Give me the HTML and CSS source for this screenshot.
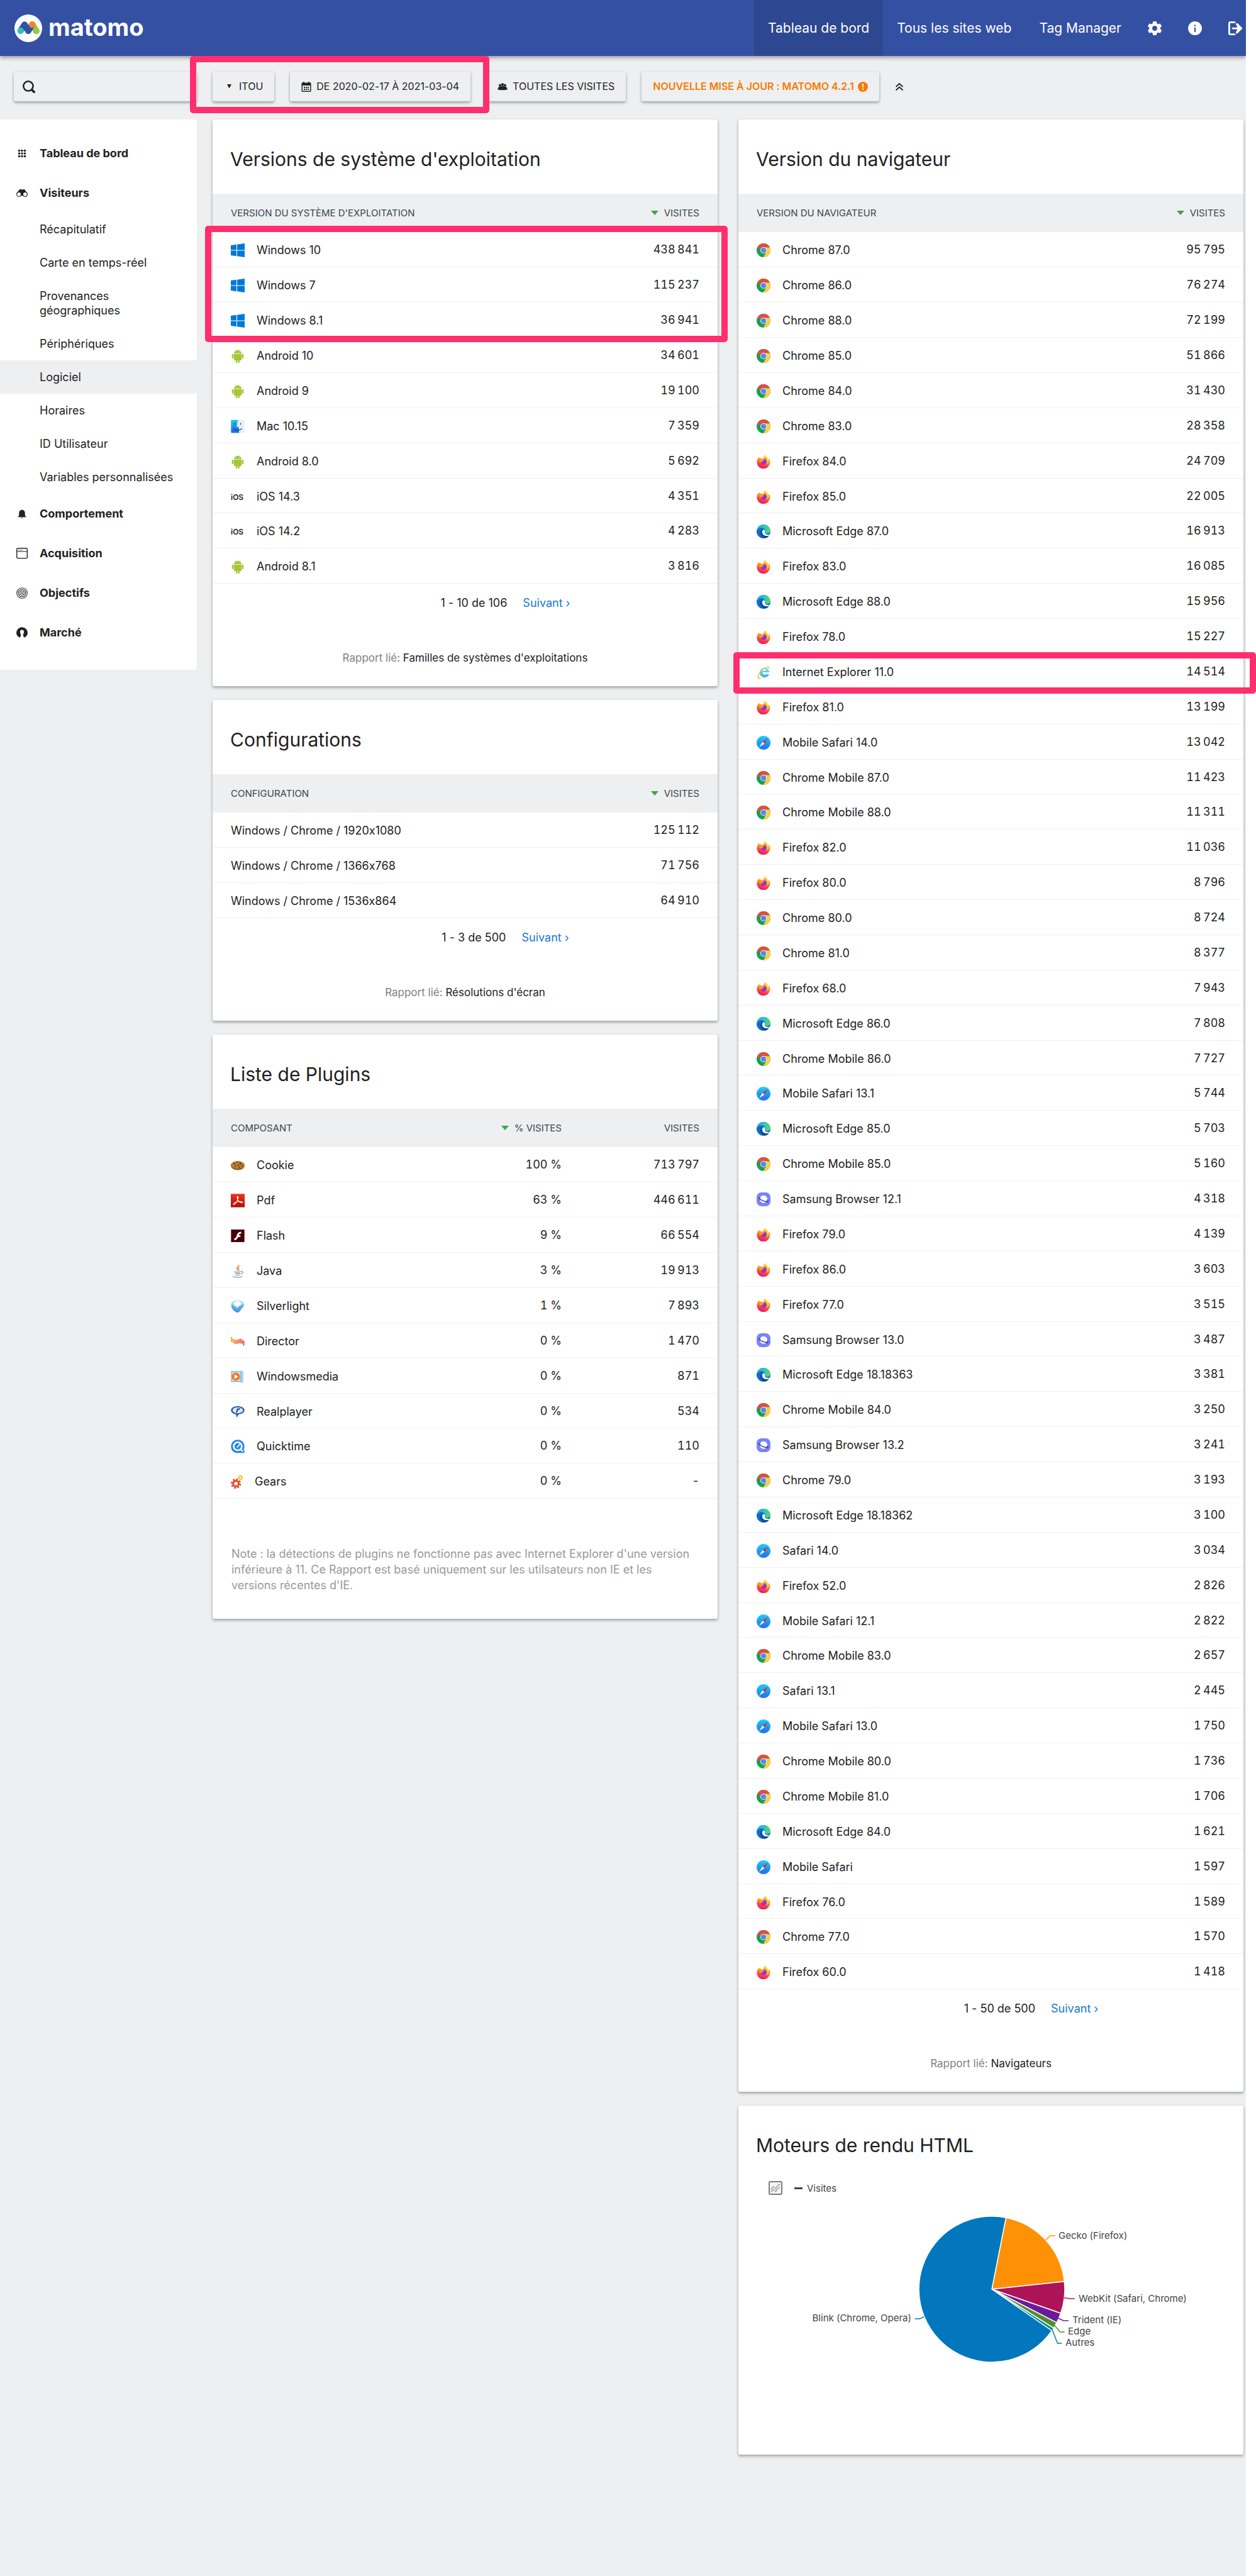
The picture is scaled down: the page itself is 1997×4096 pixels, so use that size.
FILE: index.html
```html
<!DOCTYPE html>
<html lang="fr">
<head>
<meta charset="utf-8">
<meta name="viewport" content="width=device-width, initial-scale=1">
<title>Matomo - Logiciel</title>
<link rel="stylesheet" href="styles.css">
</head>
<body>
<svg class="sprite" aria-hidden="true">
  <defs>
    <linearGradient id="g-ff" x1="0.7" y1="0" x2="0.4" y2="1"><stop offset="0" stop-color="#ffe14a"/><stop offset=".4" stop-color="#ff9a1f"/><stop offset=".75" stop-color="#ff3b47"/><stop offset="1" stop-color="#e5156f"/></linearGradient>
    <linearGradient id="g-saf" x1="0" y1="0" x2="0" y2="1"><stop offset="0" stop-color="#19d0fb"/><stop offset="1" stop-color="#2268ee"/></linearGradient>
    <linearGradient id="g-edge" x1="0" y1="0" x2="1" y2="0"><stop offset="0" stop-color="#1fa8e0"/><stop offset=".5" stop-color="#2fbfd0"/><stop offset="1" stop-color="#62dd4e"/></linearGradient>
    <linearGradient id="g-mac" x1="0" y1="0" x2="0" y2="1"><stop offset="0" stop-color="#1fc6fa"/><stop offset="1" stop-color="#1b62ee"/></linearGradient>
    <linearGradient id="g-pdf" x1="0" y1="0" x2="0" y2="1"><stop offset="0" stop-color="#f0341c"/><stop offset="1" stop-color="#ab1006"/></linearGradient>
    <linearGradient id="g-ie" x1="0" y1="0" x2="0" y2="1"><stop offset="0" stop-color="#7fdcf6"/><stop offset="1" stop-color="#35b3ea"/></linearGradient>
    <linearGradient id="g-dir" gradientUnits="userSpaceOnUse" x1="0" y1="0" x2="32" y2="0"><stop offset="0" stop-color="#f5a01e"/><stop offset="1" stop-color="#dc2326"/></linearGradient>
    <radialGradient id="g-sl" cx=".5" cy=".2" r=".8"><stop offset="0" stop-color="#ffffff"/><stop offset=".5" stop-color="#a8d8f5"/><stop offset="1" stop-color="#2b7fd0"/></radialGradient>
  </defs>
  <symbol id="chrome" viewBox="0 0 32 32"><circle cx="16" cy="16" r="16" fill="#15a05a"/><path d="M30.4 9A16 16 0 0 1 15.5 32L22.5 19.7 16 9Z" fill="#ffce44"/><path d="M2.5 7.5A16 16 0 0 1 30.4 9H16L9.5 19.7Z" fill="#dc4f41"/><circle cx="16" cy="16" r="7.4" fill="#f1f1f1"/><circle cx="16" cy="16" r="5.9" fill="#4a8af4"/></symbol>
  <symbol id="firefox" viewBox="0 0 32 32"><path d="M6 5c.2 1.8.7 2.800 1.800 3.400L10 7l-.1 2.600C12 8.500 14 8.500 15.500 8.700 16 5.500 18 2 20.500 0c.6 3 2.300 4.800 4.300 6.800C26.500 8.500 27 10 27.300 12c1-.8 1.600-1.800 1.800-3C31 12 31.600 15 31 18.500A15.300 15.300 0 0 1 .6 19C.2 13.500 2 8.500 6 5Z" fill="url(#g-ff)"/><path d="M9.500 17a6.700 6.700 0 1 0 12.800-3.500C21.500 11 19.500 8.800 16.500 8.900c1.500 1 2 2 1.900 2.900-3 .5-3.500 2.200-4.900 2.900-1.500.6-3 .7-4 2.300Z" fill="#8b35e0"/><path d="M4.500 13.500c2-1.500 4.500-2 6.500-.6l4.600.7c-1 2.600-3.500 2.300-4.600 4.300" fill="#ffa018"/><path d="M20.500 2c-2 4 3 6.500 4.300 11.500.8 4-.6 7-2.800 8.500 6-1.500 7-7 5-11.500C25.500 7.500 22 6 20.500 2Z" fill="#ffd83f"/></symbol>
  <symbol id="edge" viewBox="0 0 32 32"><circle cx="16" cy="16" r="16" fill="#0e6ccb"/><path d="M1 14C5 7 15 5 19 12c1.500 3 .2 5-.2 6.300 1.200 3.500 8 4 11.200.2A12 12 0 0 0 32 15C31.500 6 24.500 0 16 0 8 0 1.500 6 1 14Z" fill="url(#g-edge)"/><path d="M16.500 12C10 11 7 18 9.500 24c2 4.500 7 7.500 11 7.300A16 16 0 0 0 30 24c-4 2-12 2-14-4.500-.6-2.500-.5-5 .5-7.500Z" fill="#114a94"/><path d="M16.500 12c-3 .8-4.500 4-3.500 7.500 1.700 6 10 8.500 16.800 5.500.7-.8 1-1.700.3-1.800-5 1.300-10.500-.7-11.500-4.200 1.500-2 1-6-2.100-7Z" fill="#fff"/></symbol>
  <symbol id="safari" viewBox="0 0 32 32"><circle cx="16" cy="16" r="16" fill="url(#g-saf)"/><circle cx="16" cy="16" r="13.600" fill="none" stroke="#8fd3ff" stroke-width="1" stroke-opacity=".5" stroke-dasharray="1 1.400"/><path d="M26.500 5.500 18 18l-4-4Z" fill="#f2231f"/><path d="M5.500 26.500 14 14l4 4Z" fill="#fff"/></symbol>
  <symbol id="samsung" viewBox="0 0 32 32"><rect width="32" height="32" rx="11" fill="#7a83fb"/><ellipse cx="16" cy="16.500" rx="11" ry="4" transform="rotate(22 16 16.500)" fill="none" stroke="#4448b5" stroke-width="2"/><circle cx="16" cy="15.600" r="8.800" fill="#fff"/><path d="M6.300 12.800C9 18 19 22.500 26.500 20" fill="none" stroke="#4448b5" stroke-width="2.200"/></symbol>
  <symbol id="ie" viewBox="0 0 32 32"><path d="M29 20.500A11.300 11.300 0 1 1 29.600 16H13.500c.3 5.500 6.500 6 8 4.500Z M13.600 12.500h8.900c-.5-5-8.200-5-8.900 0Z" fill="url(#g-ie)" fill-rule="evenodd"/><path d="M4 31C-2 26 9 8 22 3.500c6-2.300 9.500 0 7.500 5.500C29 4 24 4.500 19.500 7 9 13 2 25 6.500 28.500c1.500 1 4 .5 6-.8C9 31 6 32.300 4 31Z" fill="#f6c330"/></symbol>
  <symbol id="windows" viewBox="0 0 32 32"><path d="M0 4.500 13 2.700V15.300H0ZM14.600 2.500 32 0V15.300H14.600ZM0 16.700H13V29.300L0 27.500ZM14.600 16.700H32V32L14.600 29.500Z" fill="#0078d7"/></symbol>
  <symbol id="android" viewBox="0 0 32 32"><path d="M7 11.500h18V24a2 2 0 0 1-2 2h-2.500v4.300a1.900 1.900 0 0 1-3.800 0V26h-1.400v4.300a1.900 1.900 0 0 1-3.800 0V26H9a2 2 0 0 1-2-2ZM2.500 12.800a1.900 1.900 0 0 1 3.700 0v7.500a1.900 1.900 0 0 1-3.700 0ZM25.800 12.800a1.900 1.900 0 0 1 3.700 0v7.500a1.900 1.900 0 0 1-3.700 0ZM7 10.500C7.200 7 9.500 4.500 12 3.500L10.500 1 11 .7l1.600 2.500a10 10 0 0 1 6.800 0L21 .7l.5.3L20 3.500c2.500 1 4.800 3.500 5 7Z" fill="#a4c639"/><circle cx="12" cy="7" r=".9" fill="#fff"/><circle cx="20" cy="7" r=".9" fill="#fff"/></symbol>
  <symbol id="mac" viewBox="0 0 32 32"><rect x=".5" y="1" width="31" height="30" rx="2" fill="#e6edf5"/><path d="M2.500 1H17c-2 5-3 10-3 16h4.500c0 5 .3 9 1 14H2.500a2 2 0 0 1-2-2V3a2 2 0 0 1 2-2Z" fill="url(#g-mac)"/><path d="M9.500 8.500v3M22.500 8.500v3M6.500 21c5 5 14 5 19 0" fill="none" stroke="#15375f" stroke-width="1.500" stroke-linecap="round"/></symbol>
  <symbol id="cookie" viewBox="0 0 32 32"><ellipse cx="16" cy="16.500" rx="16" ry="10.500" fill="#8a521d"/><ellipse cx="16" cy="15" rx="15.500" ry="9" fill="#bf7f38"/><g fill="#57300f"><circle cx="8" cy="12" r="1.700"/><circle cx="15" cy="9.500" r="1.500"/><circle cx="22" cy="12" r="2"/><circle cx="17" cy="16" r="1.800"/><circle cx="10" cy="18.500" r="1.600"/><circle cx="26" cy="17" r="1.700"/><circle cx="20" cy="21" r="1.600"/></g></symbol>
  <symbol id="pdf" viewBox="0 0 32 32"><rect width="32" height="31" y=".5" fill="url(#g-pdf)"/><path d="M6 25c-1-3 8-8 19-6.500 3 .5 3 3.200 0 2.700-5-1-10-6.500-10.500-12.200-.1-3.500 2.600-3.500 2.500 0C17 15 9 27 6 25Z" fill="none" stroke="#fff" stroke-width="1.500"/></symbol>
  <symbol id="flash" viewBox="0 0 32 32"><rect x=".5" y="1.500" width="31" height="29" fill="#450005"/><path d="M24 6.500v4.300c-3.500 0-4.500 1.500-5.500 4H22v4h-5c-2 4.500-4.500 7.500-9 7.500v-4.300c5-.5 4.800-6.500 7.500-11C17.500 8 20 6.500 24 6.500Z" fill="#fff"/></symbol>
  <symbol id="java" viewBox="0 0 32 32"><path d="M18 1c2 4-6 6-4 10 .6 1.500 2 2.500 2.200 4.500M20.500 6.500c-4 2-4.500 4-2.500 6 1 1.200.6 2.200-.5 3" fill="none" stroke="#ec7a35" stroke-width="2"/><path d="M8 17c-1 2 15 2 15 .2M9.500 21c1 1.600 11 1.600 12.500 0M11 24.800c2 1.300 8 1.300 10 0M5.500 27.500c-3 3.500 21 4 21 .5M23.500 17c6-1.500 5 4.500-.5 6" fill="none" stroke="#7f9fbd" stroke-width="1.900"/></symbol>
  <symbol id="silverlight" viewBox="0 0 32 32"><path d="M1 12C2 5 8 1 16 1c9 0 15 6 14.500 12-.6 5-5 8-8 12-2 3.500-4 5.500-7.500 5.500C9 29 1 23 1 12Z" fill="url(#g-sl)"/><path d="M1 13c6 0 10 6 14 8 4-5 8-7 15-9-1 6-6 8-8.500 13-2 4-5 5.500-8 4.500C6 27 1 20 1 13Z" fill="#4b9fe0" opacity=".75"/><path d="M5 9c6-1 15-1 21 1-4 1-8 4-11 8C12 14 8 11 5 9Z" fill="#fff"/></symbol>
  <symbol id="director" viewBox="0 0 32 32"><path d="M1.500 5.500v12M5 9v10M8.500 11.500v10M12 12v10M15.500 11.500v10M19 10.500v10M22.500 9.500v11M26 11.500v10M29.800 14v11.500" stroke="url(#g-dir)" stroke-width="2.400" fill="none"/></symbol>
  <symbol id="wmedia" viewBox="0 0 32 32"><path d="M21 2.500h8v27h-8Z" fill="#a9d2ee"/><rect x=".5" y="3" width="23" height="25.500" rx="1.500" fill="#7fb9e2"/><rect x="2.500" y="5" width="19" height="21" fill="#cfe6f6"/><circle cx="11.500" cy="16" r="9.500" fill="#f07a1c"/><path d="m8.500 10.500 8.500 5.500-8.500 5.500Z" fill="#fff"/></symbol>
  <symbol id="real" viewBox="0 0 32 32"><path d="M16 3C7 3 .5 6.500.5 12.500c0 5 5.500 8.500 11.500 9.200L13.500 29l5-7.600c7.500-.5 13-3.900 13-8.900C31.500 6.500 25 3 16 3Z" fill="#1f5ca8"/><ellipse cx="16" cy="12.300" rx="12" ry="6.900" fill="#dbe8f6"/><path d="M12 17.500 14.500 8h3l-.5 1.800c1.500-2 3-2.400 5-2l-.9 3c-3-.7-4.600.2-5.300 2.700l-1 4Z" fill="#123f80"/></symbol>
  <symbol id="quicktime" viewBox="0 0 32 32"><path d="M16 .5C25 .5 31.500 7 31.500 16c0 3-.7 5.300-1.800 7.500l1.800 3v4.500H16C7 31.500.5 25 .5 16S7 .5 16 .5Z" fill="#2389ea"/><circle cx="16" cy="15.500" r="9.300" fill="none" stroke="#fff" stroke-width="3.600"/><path d="m22 21.500 5.500 6" stroke="#fff" stroke-width="3.400"/><path d="m15 17.500 6-7" stroke="#fff" stroke-width="2.600" stroke-linecap="round"/></symbol>
  <symbol id="gears" viewBox="0 0 28 32"><circle cx="12" cy="20.500" r="6.500" fill="none" stroke="#e2492f" stroke-width="4.600"/><circle cx="12" cy="20.500" r="10.300" fill="none" stroke="#e2492f" stroke-width="3.400" stroke-dasharray="4.500 3.590"/><circle cx="22.500" cy="6.500" r="3.500" fill="none" stroke="#f3c428" stroke-width="2.600"/><circle cx="22.500" cy="6.500" r="5.300" fill="none" stroke="#f3c428" stroke-width="1.800" stroke-dasharray="2.300 1.860"/></symbol>
</svg>

<div class="shell">
  <header class="topbar">
    <a class="logo" href="#" aria-label="matomo">
      <svg viewBox="0 0 63 63"><circle cx="31.500" cy="31.500" r="31.500" fill="#fff"/><path d="M41 23 50 38" stroke="#95c748" stroke-width="14" stroke-linecap="round"/><circle cx="49.500" cy="37" r="7.500" fill="#95c748"/><path d="M14 37 23 23 31.500 37.500 40 24" stroke="#3152a0" stroke-width="14" stroke-linecap="round" stroke-linejoin="round" fill="none"/><circle cx="40.500" cy="23" r="7.600" fill="#f38334"/><circle cx="14" cy="37" r="7.400" fill="#35bfc0"/></svg>
      <span>matomo</span>
    </a>
    <nav class="topnav" aria-label="Menu principal">
      <a class="active" href="#">Tableau de bord</a>
      <a href="#">Tous les sites web</a>
      <a href="#">Tag Manager</a>
      <div class="topicons">
        <a href="#" aria-label="Administration"><svg viewBox="0 0 32 32"><path fill="#fff" fill-rule="evenodd" d="M12 0h8l.9 4.800 3 1.700 4.500-1.700 3.800 6.700-3.600 3v3l3.600 3-3.800 6.700-4.500-1.700-3 1.700L20 32h-8l-.9-4.800-3-1.700-4.500 1.700L-.2 20.500l3.600-3v-3l-3.600-3 3.800-6.700 4.500 1.700 3-1.700ZM16 10.300a5.700 5.700 0 1 0 0 11.400 5.700 5.700 0 0 0 0-11.400Z"/></svg></a>
        <a href="#" aria-label="Aide"><svg viewBox="0 0 32 32"><circle cx="16" cy="16" r="16" fill="#fff"/><path d="M14.300 8h3.400v3.200h-3.400ZM14.300 14.300h3.400v10.200h-3.400Z" fill="#3450a3"/></svg></a>
        <a href="#" aria-label="Déconnexion"><svg viewBox="0 0 32 32"><path d="M14.500 2H5a3 3 0 0 0-3 3v22a3 3 0 0 0 3 3h9.500M10 16h16" fill="none" stroke="#fff" stroke-width="4" stroke-linecap="round"/><path d="m20 6.500 9.500 9.500-9.500 9.500" fill="none" stroke="#fff" stroke-width="5" stroke-linecap="round" stroke-linejoin="round"/><path d="M20 6.500 29.500 16 20 25.500Z" fill="#fff"/></svg></a>
      </div>
    </nav>
  </header>

  <div class="layout">
    <aside class="side">
      <form class="search" role="search">
        <label for="q"><svg viewBox="0 0 28 28"><circle cx="12.500" cy="12.500" r="10.700" fill="none" stroke="#212121" stroke-width="3.500"/><path d="m20.500 20.500 5 5" stroke="#212121" stroke-width="5" stroke-linecap="round"/></svg></label>
        <input id="q" type="text" aria-label="Recherche">
      </form>
      <nav class="menu" aria-label="Rapports">
        <a class="cat" href="#"><svg viewBox="0 0 26 26"><g fill="#212121"><circle cx="6.500" cy="6.500" r="2.600"/><circle cx="13" cy="6.500" r="2.600"/><circle cx="19.500" cy="6.500" r="2.600"/><circle cx="6.500" cy="13" r="2.600"/><circle cx="13" cy="13" r="2.600"/><circle cx="19.500" cy="13" r="2.600"/><circle cx="6.500" cy="19.500" r="2.600"/><circle cx="13" cy="19.500" r="2.600"/><circle cx="19.500" cy="19.500" r="2.600"/></g></svg>Tableau de bord</a>
        <a class="cat" href="#"><svg viewBox="0 0 26 26"><path d="M1 14 6 6c1.500-2 5-2 7-.6 2-1.400 5.500-1.400 7 .6l5 8-7 5H8Z" fill="#212121"/><circle cx="6" cy="15.800" r="5" fill="#fff" stroke="#212121" stroke-width="1.800"/><circle cx="20" cy="15.800" r="5" fill="#fff" stroke="#212121" stroke-width="1.800"/></svg>Visiteurs</a>
        <a class="sub" href="#">Récapitulatif</a>
        <a class="sub" href="#">Carte en temps-réel</a>
        <a class="sub" href="#">Provenances<br>géographiques</a>
        <a class="sub" href="#">Périphériques</a>
        <a class="sub current" href="#">Logiciel</a>
        <a class="sub" href="#">Horaires</a>
        <a class="sub" href="#">ID Utilisateur</a>
        <a class="sub" href="#">Variables personnalisées</a>
        <a class="cat" href="#"><svg viewBox="0 0 26 26"><path d="M3.500 20c2-1.200 2.700-3 2.700-5.500V11a6.800 6.800 0 0 1 5.300-6.600 1.600 1.600 0 0 1 3 0A6.800 6.800 0 0 1 19.800 11v3.500c0 2.500.7 4.300 2.700 5.500v.7h-19ZM11 21.500h4c-.2 2.200-3.800 2.200-4 0Z" fill="#212121"/></svg>Comportement</a>
        <a class="cat" href="#"><svg viewBox="0 0 26 26"><rect x="1" y="1" width="24" height="23" rx="3" fill="none" stroke="#212121" stroke-width="2"/><path d="M1 8.500h24" stroke="#212121" stroke-width="1.500"/><path d="M5 5.500h2M8.500 5.500h2M12 5.500h2" stroke="#212121" stroke-width="1.600"/></svg>Acquisition</a>
        <a class="cat" href="#"><svg viewBox="0 0 26 26"><g fill="none" stroke="#212121" stroke-width="1.600"><circle cx="13" cy="13" r="12"/><circle cx="13" cy="13" r="8.300"/><circle cx="13" cy="13" r="4.700"/></g><circle cx="13" cy="13" r="1.700" fill="#212121"/></svg>Objectifs</a>
        <a class="cat" href="#"><svg viewBox="0 0 26 26"><path d="M8 24.500C3 22.500 0 18.500 0 13.500a13 13 0 0 1 26 0c0 5-3 9-8 11l-2.800-5.700 2-5.800a4.600 4.600 0 1 0-8.400 0l2 5.800Z" fill="#212121"/></svg>Marché</a>
      </nav>
    </aside>

    <main class="main">
      <div class="toolbar">
        <div class="marked">
          <button class="pill" type="button"><svg viewBox="0 0 16 16"><path d="M5 4h7L8.500 10.500Z" fill="#212121"/></svg>ITOU</button>
          <button class="pill" type="button"><svg viewBox="0 0 16 16"><path d="M1.500 1.500h13a1 1 0 0 1 1 1v12a1.500 1.500 0 0 1-1.500 1.500H2a1.500 1.500 0 0 1-1.500-1.500v-12a1 1 0 0 1 1-1ZM2 6v8.500h12V6Z" fill="#212121" fill-rule="evenodd"/><path d="M4 8h2v2H4ZM7 8h2v2H7ZM10 8h2v2h-2ZM4 11h2v2H4ZM7 11h2v2H7ZM10 11h2v2h-2ZM3 0h2v3H3ZM11 0h2v3h-2Z" fill="#212121"/></svg>DE 2020-02-17 À 2021-03-04</button>
          <span class="mark mark-bar"></span>
        </div>
        <button class="pill" type="button"><svg viewBox="0 0 16 16"><g fill="#212121"><circle cx="4" cy="5.500" r="1.900"/><circle cx="8" cy="4.500" r="2.200"/><circle cx="12" cy="5.500" r="1.900"/><path d="M2 8c2-1.500 10-1.500 12 0l2 4c-2 1.800-14 1.800-16 0Z"/></g></svg>TOUTES LES VISITES</button>
        <a class="pill update" href="#">NOUVELLE MISE À JOUR : MATOMO 4.2.1<svg viewBox="0 0 16 16"><circle cx="8" cy="8" r="8" fill="#f57c00"/><path d="M7 3h2l-.3 6.500H7.300ZM7 10.800h2v2H7Z" fill="#fff"/></svg></a>
        <button class="collapse" type="button" aria-label="Replier"><svg viewBox="0 0 14 14"><path d="m1.500 7 5.500-5 5.500 5M1.500 12.500l5.500-5 5.500 5" fill="none" stroke="#212121" stroke-width="1.800"/></svg></button>
      </div>

      <div class="cards">
        <div class="col">
          <section class="card">
            <h2>Versions de système d'exploitation</h2>
            <table>
              <thead><tr><th>VERSION DU SYSTÈME D'EXPLOITATION</th><th class="sorted">VISITES</th></tr></thead>
              <tbody>
                <tr><td><svg class="ic"><use href="#windows"/></svg>Windows 10</td><td>438&#8239;841</td></tr>
                <tr><td><svg class="ic"><use href="#windows"/></svg>Windows 7</td><td>115&#8239;237</td></tr>
                <tr><td><svg class="ic"><use href="#windows"/></svg>Windows 8.1</td><td>36&#8239;941</td></tr>
                <tr><td><svg class="ic"><use href="#android"/></svg>Android 10</td><td>34&#8239;601</td></tr>
                <tr><td><svg class="ic"><use href="#android"/></svg>Android 9</td><td>19&#8239;100</td></tr>
                <tr><td><svg class="ic"><use href="#mac"/></svg>Mac 10.15</td><td>7&#8239;359</td></tr>
                <tr><td><svg class="ic"><use href="#android"/></svg>Android 8.0</td><td>5&#8239;692</td></tr>
                <tr><td><span class="ic ios">iOS</span>iOS 14.3</td><td>4&#8239;351</td></tr>
                <tr><td><span class="ic ios">iOS</span>iOS 14.2</td><td>4&#8239;283</td></tr>
                <tr><td><svg class="ic"><use href="#android"/></svg>Android 8.1</td><td>3&#8239;816</td></tr>
              </tbody>
            </table>
            <div class="pager"><span>1 - 10 de 106</span><a href="#">Suivant ›</a></div>
            <p class="related">Rapport lié: <a href="#">Familles de systèmes d'exploitations</a></p>
            <span class="mark mark-windows"></span>
          </section>

          <section class="card">
            <h2>Configurations</h2>
            <table>
              <thead><tr><th>CONFIGURATION</th><th class="sorted">VISITES</th></tr></thead>
              <tbody>
                <tr><td>Windows / Chrome / 1920x1080</td><td>125&#8239;112</td></tr>
                <tr><td>Windows / Chrome / 1366x768</td><td>71&#8239;756</td></tr>
                <tr><td>Windows / Chrome / 1536x864</td><td>64&#8239;910</td></tr>
              </tbody>
            </table>
            <div class="pager"><span>1 - 3 de 500</span><a href="#">Suivant ›</a></div>
            <p class="related">Rapport lié: <a href="#">Résolutions d'écran</a></p>
          </section>

          <section class="card">
            <h2>Liste de Plugins</h2>
            <table class="plugins">
              <thead><tr><th>COMPOSANT</th><th class="sorted">% VISITES</th><th>VISITES</th></tr></thead>
              <tbody>
                <tr><td><svg class="ic"><use href="#cookie"/></svg>Cookie</td><td>100 %</td><td>713&#8239;797</td></tr>
                <tr><td><svg class="ic"><use href="#pdf"/></svg>Pdf</td><td>63 %</td><td>446&#8239;611</td></tr>
                <tr><td><svg class="ic"><use href="#flash"/></svg>Flash</td><td>9 %</td><td>66&#8239;554</td></tr>
                <tr><td><svg class="ic"><use href="#java"/></svg>Java</td><td>3 %</td><td>19&#8239;913</td></tr>
                <tr><td><svg class="ic"><use href="#silverlight"/></svg>Silverlight</td><td>1 %</td><td>7&#8239;893</td></tr>
                <tr><td><svg class="ic"><use href="#director"/></svg>Director</td><td>0 %</td><td>1&#8239;470</td></tr>
                <tr><td><svg class="ic"><use href="#wmedia"/></svg>Windowsmedia</td><td>0 %</td><td>871</td></tr>
                <tr><td><svg class="ic"><use href="#real"/></svg>Realplayer</td><td>0 %</td><td>534</td></tr>
                <tr><td><svg class="ic"><use href="#quicktime"/></svg>Quicktime</td><td>0 %</td><td>110</td></tr>
                <tr><td><svg class="ic narrow"><use href="#gears"/></svg>Gears</td><td>0 %</td><td>-</td></tr>
              </tbody>
            </table>
            <p class="note">Note : la détections de plugins ne fonctionne pas avec Internet Explorer d'une version inférieure à 11. Ce Rapport est basé uniquement sur les utilsateurs non IE et les versions récentes d'IE.</p>
          </section>
        </div>

        <div class="col">
          <section class="card">
            <h2>Version du navigateur</h2>
            <table>
              <thead><tr><th>VERSION DU NAVIGATEUR</th><th class="sorted">VISITES</th></tr></thead>
              <tbody>
                <tr><td><svg class="ic"><use href="#chrome"/></svg>Chrome 87.0</td><td>95&#8239;795</td></tr>
                <tr><td><svg class="ic"><use href="#chrome"/></svg>Chrome 86.0</td><td>76&#8239;274</td></tr>
                <tr><td><svg class="ic"><use href="#chrome"/></svg>Chrome 88.0</td><td>72&#8239;199</td></tr>
                <tr><td><svg class="ic"><use href="#chrome"/></svg>Chrome 85.0</td><td>51&#8239;866</td></tr>
                <tr><td><svg class="ic"><use href="#chrome"/></svg>Chrome 84.0</td><td>31&#8239;430</td></tr>
                <tr><td><svg class="ic"><use href="#chrome"/></svg>Chrome 83.0</td><td>28&#8239;358</td></tr>
                <tr><td><svg class="ic"><use href="#firefox"/></svg>Firefox 84.0</td><td>24&#8239;709</td></tr>
                <tr><td><svg class="ic"><use href="#firefox"/></svg>Firefox 85.0</td><td>22&#8239;005</td></tr>
                <tr><td><svg class="ic"><use href="#edge"/></svg>Microsoft Edge 87.0</td><td>16&#8239;913</td></tr>
                <tr><td><svg class="ic"><use href="#firefox"/></svg>Firefox 83.0</td><td>16&#8239;085</td></tr>
                <tr><td><svg class="ic"><use href="#edge"/></svg>Microsoft Edge 88.0</td><td>15&#8239;956</td></tr>
                <tr><td><svg class="ic"><use href="#firefox"/></svg>Firefox 78.0</td><td>15&#8239;227</td></tr>
                <tr><td><svg class="ic"><use href="#ie"/></svg>Internet Explorer 11.0</td><td>14&#8239;514</td></tr>
                <tr><td><svg class="ic"><use href="#firefox"/></svg>Firefox 81.0</td><td>13&#8239;199</td></tr>
                <tr><td><svg class="ic"><use href="#safari"/></svg>Mobile Safari 14.0</td><td>13&#8239;042</td></tr>
                <tr><td><svg class="ic"><use href="#chrome"/></svg>Chrome Mobile 87.0</td><td>11&#8239;423</td></tr>
                <tr><td><svg class="ic"><use href="#chrome"/></svg>Chrome Mobile 88.0</td><td>11&#8239;311</td></tr>
                <tr><td><svg class="ic"><use href="#firefox"/></svg>Firefox 82.0</td><td>11&#8239;036</td></tr>
                <tr><td><svg class="ic"><use href="#firefox"/></svg>Firefox 80.0</td><td>8&#8239;796</td></tr>
                <tr><td><svg class="ic"><use href="#chrome"/></svg>Chrome 80.0</td><td>8&#8239;724</td></tr>
                <tr><td><svg class="ic"><use href="#chrome"/></svg>Chrome 81.0</td><td>8&#8239;377</td></tr>
                <tr><td><svg class="ic"><use href="#firefox"/></svg>Firefox 68.0</td><td>7&#8239;943</td></tr>
                <tr><td><svg class="ic"><use href="#edge"/></svg>Microsoft Edge 86.0</td><td>7&#8239;808</td></tr>
                <tr><td><svg class="ic"><use href="#chrome"/></svg>Chrome Mobile 86.0</td><td>7&#8239;727</td></tr>
                <tr><td><svg class="ic"><use href="#safari"/></svg>Mobile Safari 13.1</td><td>5&#8239;744</td></tr>
                <tr><td><svg class="ic"><use href="#edge"/></svg>Microsoft Edge 85.0</td><td>5&#8239;703</td></tr>
                <tr><td><svg class="ic"><use href="#chrome"/></svg>Chrome Mobile 85.0</td><td>5&#8239;160</td></tr>
                <tr><td><svg class="ic"><use href="#samsung"/></svg>Samsung Browser 12.1</td><td>4&#8239;318</td></tr>
                <tr><td><svg class="ic"><use href="#firefox"/></svg>Firefox 79.0</td><td>4&#8239;139</td></tr>
                <tr><td><svg class="ic"><use href="#firefox"/></svg>Firefox 86.0</td><td>3&#8239;603</td></tr>
                <tr><td><svg class="ic"><use href="#firefox"/></svg>Firefox 77.0</td><td>3&#8239;515</td></tr>
                <tr><td><svg class="ic"><use href="#samsung"/></svg>Samsung Browser 13.0</td><td>3&#8239;487</td></tr>
                <tr><td><svg class="ic"><use href="#edge"/></svg>Microsoft Edge 18.18363</td><td>3&#8239;381</td></tr>
                <tr><td><svg class="ic"><use href="#chrome"/></svg>Chrome Mobile 84.0</td><td>3&#8239;250</td></tr>
                <tr><td><svg class="ic"><use href="#samsung"/></svg>Samsung Browser 13.2</td><td>3&#8239;241</td></tr>
                <tr><td><svg class="ic"><use href="#chrome"/></svg>Chrome 79.0</td><td>3&#8239;193</td></tr>
                <tr><td><svg class="ic"><use href="#edge"/></svg>Microsoft Edge 18.18362</td><td>3&#8239;100</td></tr>
                <tr><td><svg class="ic"><use href="#safari"/></svg>Safari 14.0</td><td>3&#8239;034</td></tr>
                <tr><td><svg class="ic"><use href="#firefox"/></svg>Firefox 52.0</td><td>2&#8239;826</td></tr>
                <tr><td><svg class="ic"><use href="#safari"/></svg>Mobile Safari 12.1</td><td>2&#8239;822</td></tr>
                <tr><td><svg class="ic"><use href="#chrome"/></svg>Chrome Mobile 83.0</td><td>2&#8239;657</td></tr>
                <tr><td><svg class="ic"><use href="#safari"/></svg>Safari 13.1</td><td>2&#8239;445</td></tr>
                <tr><td><svg class="ic"><use href="#safari"/></svg>Mobile Safari 13.0</td><td>1&#8239;750</td></tr>
                <tr><td><svg class="ic"><use href="#chrome"/></svg>Chrome Mobile 80.0</td><td>1&#8239;736</td></tr>
                <tr><td><svg class="ic"><use href="#chrome"/></svg>Chrome Mobile 81.0</td><td>1&#8239;706</td></tr>
                <tr><td><svg class="ic"><use href="#edge"/></svg>Microsoft Edge 84.0</td><td>1&#8239;621</td></tr>
                <tr><td><svg class="ic"><use href="#safari"/></svg>Mobile Safari</td><td>1&#8239;597</td></tr>
                <tr><td><svg class="ic"><use href="#firefox"/></svg>Firefox 76.0</td><td>1&#8239;589</td></tr>
                <tr><td><svg class="ic"><use href="#chrome"/></svg>Chrome 77.0</td><td>1&#8239;570</td></tr>
                <tr><td><svg class="ic"><use href="#firefox"/></svg>Firefox 60.0</td><td>1&#8239;418</td></tr>
              </tbody>
            </table>
            <div class="pager"><span>1 - 50 de 500</span><a href="#">Suivant ›</a></div>
            <p class="related">Rapport lié: <a href="#">Navigateurs</a></p>
            <span class="mark mark-ie"></span>
          </section>

          <section class="card">
            <h2>Moteurs de rendu HTML</h2>
            <div class="legend">
              <svg viewBox="0 0 22 22"><rect x="1" y="1" width="20" height="20" rx="2" fill="#f4f4f4" stroke="#7c7c7c" stroke-width="2"/><path d="m3.500 13.500 4-4.500 4 3 3-5 4-2M3.500 17.500l4-4 4 3 3-4.500 4-2.500" fill="none" stroke="#9a9a9a" stroke-width="1.400"/></svg>
              <i></i><span>Visites</span>
            </div>
            <svg class="pie" viewBox="0 0 803 403" role="img" aria-label="Moteurs de rendu HTML">
              <g stroke="#fff" stroke-width="1.500" stroke-linejoin="round">
                <path d="M403 140 425.500 26.200A116 116 0 0 1 518.300 127.700Z" fill="#ff9106"/>
                <path d="M403 140 518.300 127.700A116 116 0 0 1 512.500 178.300Z" fill="#ad1457"/>
                <path d="M403 140 512.500 178.300A116 116 0 0 1 506.100 193.200Z" fill="#6a1b9a"/>
                <path d="M403 140 506.100 193.200A116 116 0 0 1 501.200 201.800Z" fill="#558b2f"/>
                <path d="M403 140 501.200 201.800A116 116 0 0 1 498.400 206Z" fill="#00838f"/>
                <path d="M403 140 498.400 206A116 116 0 1 1 425.500 26.200Z" fill="#0277bd"/>
              </g>
              <g fill="none" stroke-width="1.500">
                <path d="M488.700 62 496 55h8" stroke="#ff9106"/>
                <path d="M518 153.500 526.600 155h8" stroke="#ad1457"/>
                <path d="M508.400 186 517 190h8" stroke="#6a1b9a"/>
                <path d="M502.600 197.600 511.700 208h7" stroke="#558b2f"/>
                <path d="M498.800 203.700 507.400 226h7" stroke="#00838f"/>
                <path d="M295.400 183.600 288.500 187h-8" stroke="#0277bd"/>
              </g>
              <g class="pie-labels">
                <text x="509" y="60">Gecko (Firefox)</text>
                <text x="541" y="160">WebKit (Safari, Chrome)</text>
                <text x="531" y="194">Trident (IE)</text>
                <text x="524" y="212">Edge</text>
                <text x="520" y="230">Autres</text>
                <text x="275" y="191" text-anchor="end">Blink (Chrome, Opera)</text>
              </g>
            </svg>
          </section>
        </div>
      </div>
    </main>
  </div>
</div>
</body>
</html>
```
FILE: styles.css
```css
*,
*::before,
*::after {
  box-sizing: border-box;
}

html {
  background: #fff;
}

body {
  margin: 0;
  padding-right: 16px;
  font-family: Inter, "Liberation Sans", sans-serif;
  font-size: 18px;
  font-feature-settings: "calt" 0;
  line-height: 23px;
  color: #212121;
}

a {
  color: inherit;
  text-decoration: none;
}

button,
input {
  font: inherit;
  color: inherit;
}

.sprite {
  position: absolute;
  width: 0;
  height: 0;
}

.shell {
  min-height: 100vh;
  background: #eeeff1;
}

/* Top bar */
.topbar {
  position: relative;
  display: flex;
  align-items: center;
  justify-content: space-between;
  height: 89px;
  padding: 0 6px 0 23px;
  background: #3450a3;
  color: #fff;
  box-shadow: 0 3px 6px rgba(0, 0, 0, .35);
  clip-path: inset(0 0 -12px 0);
}

.logo {
  display: flex;
  align-items: center;
  gap: 10px;
  font-size: 38px;
  font-weight: 700;
  line-height: 44px;
}

.logo svg {
  width: 44px;
  height: 44px;
}

.logo span {
  padding-bottom: 4px;
}

.topnav {
  display: flex;
  align-items: center;
  font-size: 21px;
}

.topnav > a {
  height: 89px;
  padding: 0 22px;
  line-height: 89px;
}

.topnav > .active {
  background: #2d4790;
}

.topicons {
  display: flex;
  gap: 42px;
  padding-left: 20px;
}

.topicons a,
.topicons svg {
  display: block;
  width: 22px;
  height: 22px;
}

/* Page columns */
.layout {
  display: grid;
  grid-template-columns: 313px minmax(0, 1fr);
  gap: 25px;
  align-items: start;
  padding: 25px 4px 0 0;
}

.search {
  display: flex;
  align-items: center;
  height: 47px;
  margin: 0 0 29px 22px;
  padding: 0 16px 0 14px;
  border-radius: 3px;
}

.search label,
.search svg {
  display: block;
  width: 20px;
  height: 20px;
}

.search input {
  flex: 1;
  min-width: 0;
  margin-left: 10px;
  border: 0;
  background: none;
  outline: 0;
}

.search,
.pill,
.card {
  box-shadow: 0 3px 4px rgba(0, 0, 0, .22), 0 1px 4px rgba(0, 0, 0, .16);
}

.menu {
  padding: 22px 0 28px;
  background: #fff;
}

.menu a {
  display: flex;
  align-items: center;
}

.cat {
  height: 63px;
  gap: 19px;
  padding-left: 26px;
  font-weight: 700;
}

.cat svg {
  width: 18px;
  height: 18px;
}

.sub {
  padding: 15px 20px 15px 63px;
}

.current {
  background: #eeeff1;
}

/* Toolbar */
.toolbar {
  display: flex;
  gap: 25px;
  height: 47px;
  margin-bottom: 29px;
  font-size: 16px;
}

.marked {
  position: relative;
  display: flex;
  gap: 25px;
}

.pill {
  display: flex;
  align-items: center;
  gap: 8px;
  height: 47px;
  padding: 0 18px;
  border: 0;
  border-radius: 3px;
  background: #eeeff1;
  white-space: nowrap;
}

.pill svg {
  width: 16px;
  height: 16px;
}

.update {
  gap: 6px;
  color: #f57c00;
  font-weight: 600;
}

.collapse {
  padding: 0;
  border: 0;
  background: none;
}

.collapse svg {
  display: block;
  width: 14px;
  height: 14px;
}

/* Highlight frames */
.mark {
  position: absolute;
  z-index: 2;
  border: 10px solid #ff2e6c;
  border-radius: 5px;
  pointer-events: none;
}

.mark-bar {
  inset: -25px -30px -19px -36px;
}

.mark-windows {
  top: 169px;
  right: -16px;
  left: -12px;
  height: 185px;
}

.mark-ie {
  top: 847px;
  right: -20px;
  left: -8px;
  height: 66px;
}

/* Cards */
.cards {
  display: grid;
  grid-template-columns: repeat(2, minmax(0, 1fr));
  gap: 33px;
  align-items: start;
}

.col {
  display: grid;
  gap: 22px;
}

.card {
  position: relative;
  border-radius: 3px;
  background: #fff;
}

.card h2 {
  margin: 0;
  padding: 41px 28px 33px;
  font-size: 30px;
  font-weight: 400;
  line-height: 44px;
}

table {
  width: 100%;
  border-spacing: 0;
}

th {
  height: 61px;
  padding: 0 29px;
  background: #eeeff1;
  color: #37474f;
  font-size: 15px;
  font-weight: 400;
  text-align: right;
}

td {
  height: 56px;
  padding: 0 29px;
  border-bottom: 1px solid #f0f0f0;
  font-variant-numeric: tabular-nums;
  text-align: right;
}

tr:nth-child(8n) td {
  height: 55px;
}

th:first-child,
td:first-child {
  font-variant-numeric: normal;
  text-align: left;
}

td:first-child {
  padding-top: 2px;
}

.plugins th:last-child {
  width: 219px;
}

.sorted::before {
  content: "";
  display: inline-block;
  margin-right: 9px;
  border: 6px solid transparent;
  border-top: 7px solid #43a047;
  border-bottom: 0;
  vertical-align: 2px;
}

.ic {
  display: inline-block;
  width: 22px;
  height: 22px;
  margin-right: 19px;
  vertical-align: -5px;
}

.narrow {
  width: 19px;
}

.ios {
  height: auto;
  font-size: 12px;
  font-weight: 600;
  line-height: 16px;
  vertical-align: 1px;
}

.pager {
  display: flex;
  justify-content: center;
  gap: 25px;
  padding: 19px 0 65px 128px;
}

.pager a {
  color: #1976d2;
}

.related {
  margin: 0;
  padding-bottom: 33px;
  color: #808080;
  font-size: 17px;
  text-align: center;
}

.related a {
  color: #212121;
}

.note {
  margin: 0;
  padding: 75px 30px 41px;
  color: #999;
  line-height: 25px;
}

/* Chart */
.legend {
  display: flex;
  align-items: center;
  height: 34px;
  padding: 0 0 8px 48px;
  color: #444;
  font-size: 15px;
}

.legend svg {
  width: 22px;
  height: 22px;
}

.legend i {
  width: 13px;
  height: 3px;
  margin: 0 7px 0 19px;
  background: #444;
}

.pie {
  display: block;
  width: 100%;
  max-width: 803px;
  margin: 0 auto;
}

.pie-labels {
  fill: #444;
  font-size: 15px;
}
```
